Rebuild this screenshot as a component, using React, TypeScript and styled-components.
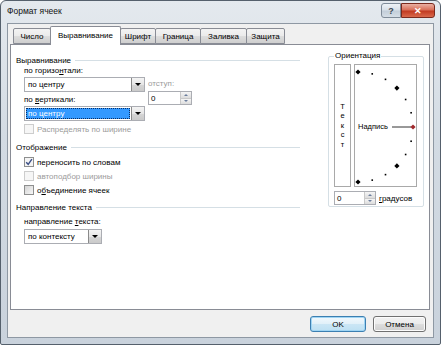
import React from 'react'
import styled, { createGlobalStyle, css } from 'styled-components'

const GlobalStyle = createGlobalStyle`
  html, body { margin: 0; padding: 0; background: #fff; }
  body { font-family: "Liberation Sans", Arial, sans-serif; font-size: 8px; color: #000; }
  * { box-sizing: border-box; }
`

const Window = styled.div`
  width: 441px;
  height: 345px;
  display: flex;
  flex-direction: column;
  border: 1px solid #55606c;
  border-radius: 6px 6px 2px 2px;
  background: linear-gradient(180deg, #e4e9ee 0%, #d3dbe3 40%, #c9d2dc 100%);
  padding: 0 6px 6px 6px;
`

const TitleBar = styled.div`
  height: 22px;
  display: flex;
  align-items: flex-start;
  justify-content: space-between;
`

const Title = styled.div`
  font-size: 8.5px;
  margin-top: 5px;
  margin-left: 0;
  color: #111;
`

const Caption = styled.div`
  display: flex;
  margin-top: 2px;
  margin-right: -1px;
`

const CapBtn = styled.div<{ $close?: boolean }>`
  height: 15px;
  width: ${({ $close }) => ($close ? '34px' : '20px')};
  display: flex;
  align-items: center;
  justify-content: center;
  border: 1px solid ${({ $close }) => ($close ? '#7a2a1e' : '#7f8b98')};
  border-radius: ${({ $close }) => ($close ? '0 3px 3px 0' : '3px 0 0 3px')};
  font-weight: bold;
  font-size: 9px;
  ${({ $close }) =>
    $close
      ? css`
          background: linear-gradient(180deg, #eab0a3 0%, #d9705a 45%, #c23b22 55%, #d9694c 100%);
          color: #fff;
        `
      : css`
          background: linear-gradient(180deg, #eef2f6 0%, #d8e0e8 45%, #c3ced9 55%, #d6dee6 100%);
          color: #3d4752;
        `}
`

const Client = styled.div`
  flex: 1;
  display: flex;
  flex-direction: column;
  background: #f0f0f0;
  border: 1px solid #8e98a3;
  padding: 2px 3px 0 2px;
`

const Tabs = styled.div`
  height: 18px;
  display: flex;
  align-items: flex-end;
  padding-left: 3px;
  position: relative;
  z-index: 1;
`

const Tab = styled.div<{ $w: number; $active?: boolean }>`
  width: ${({ $w }) => $w}px;
  height: ${({ $active }) => ($active ? 19 : 16)}px;
  margin-bottom: ${({ $active }) => ($active ? -1 : 0)}px;
  display: flex;
  align-items: center;
  justify-content: center;
  border: 1px solid #898c95;
  border-bottom: ${({ $active }) => ($active ? 'none' : '1px solid #898c95')};
  margin-right: -1px;
  border-radius: 2px 2px 0 0;
  padding-bottom: ${({ $active }) => ($active ? 2 : 0)}px;
  background: ${({ $active }) =>
    $active ? '#fff' : 'linear-gradient(180deg, #f3f3f3 0%, #ebebeb 50%, #dddddd 51%, #cfcfcf 100%)'};
  position: relative;
  z-index: ${({ $active }) => ($active ? 2 : 0)};
`

const Panel = styled.div`
  height: 266px;
  background: #fff;
  border: 1px solid #898c95;
  display: grid;
  grid-template-columns: 284px 96px;
  column-gap: 28px;
  padding: 9px 0 0 5px;
  align-items: start;
`

const LeftCol = styled.div`
  display: flex;
  flex-direction: column;
`

const GroupHead = styled.div<{ $mt?: number }>`
  display: flex;
  align-items: center;
  height: 12px;
  margin-top: ${({ $mt }) => $mt ?? 0}px;
  &::after {
    content: '';
    flex: 1;
    height: 1px;
    background: #d5dfe5;
    margin-left: 4px;
  }
`

const Label = styled.div<{ $disabled?: boolean; $mt?: number }>`
  height: 12px;
  line-height: 12px;
  margin-top: ${({ $mt }) => $mt ?? 0}px;
  color: ${({ $disabled }) => ($disabled ? '#9b9b9b' : '#000')};
  white-space: nowrap;
`

const Indented = styled.div<{ $mt?: number }>`
  padding-left: 8px;
  margin-top: ${({ $mt }) => $mt ?? 0}px;
  display: flex;
  flex-direction: column;
`

const AlignRow = styled.div`
  display: flex;
  gap: 3px;
  margin-top: -1px;
`

const Stack = styled.div`
  display: flex;
  flex-direction: column;
`

const IndentCol = styled.div`
  display: flex;
  flex-direction: column;
  padding-top: 13px;
`

const Combo = styled.div<{ $w: number; $mt?: number }>`
  width: ${({ $w }) => $w}px;
  height: 15px;
  margin-top: ${({ $mt }) => $mt ?? 0}px;
  display: flex;
  border: 1px solid #abadb3;
  background: #fff;
`

const ComboText = styled.div<{ $selected?: boolean }>`
  flex: 1;
  display: flex;
  align-items: center;
  padding-left: 2px;
  margin: 1px;
  ${({ $selected }) =>
    $selected &&
    css`
      background: #3399ff;
      color: #fff;
      outline: 1px dotted #0b2f63;
      outline-offset: -1px;
    `}
`

const DropBtn = styled.div`
  width: 13px;
  display: flex;
  align-items: center;
  justify-content: center;
  border-left: 1px solid #8a8a8a;
  background: linear-gradient(180deg, #f4f4f4 0%, #e6e6e6 50%, #d6d6d6 51%, #cacaca 100%);
  &::after {
    content: '';
    border-left: 3px solid transparent;
    border-right: 3px solid transparent;
    border-top: 3px solid #000;
  }
`

const Spin = styled.div<{ $w: number }>`
  width: ${({ $w }) => $w}px;
  height: 14px;
  display: flex;
  border: 1px solid #abadb3;
  background: #fff;
  margin-top: 1px;
`

const SpinText = styled.div`
  flex: 1;
  display: flex;
  align-items: center;
  padding-left: 2px;
`

const SpinBtns = styled.div`
  width: 11px;
  display: flex;
  flex-direction: column;
  border-left: 1px solid #c9c9c9;
`

const SpinArrow = styled.div<{ $up?: boolean }>`
  flex: 1;
  display: flex;
  align-items: center;
  justify-content: center;
  background: linear-gradient(180deg, #f5f5f5, #dcdcdc);
  border-bottom: ${({ $up }) => ($up ? '1px solid #c9c9c9' : 'none')};
  &::after {
    content: '';
    border-left: 2px solid transparent;
    border-right: 2px solid transparent;
    ${({ $up }) => ($up ? 'border-bottom: 2px solid #6a7d9c;' : 'border-top: 2px solid #6a7d9c;')}
  }
`

const CheckRow = styled.div<{ $h?: number; $mt?: number; $disabled?: boolean }>`
  height: ${({ $h }) => $h ?? 14}px;
  margin-top: ${({ $mt }) => $mt ?? 0}px;
  display: flex;
  align-items: center;
  gap: 3px;
  color: ${({ $disabled }) => ($disabled ? '#9b9b9b' : '#000')};
`

const Box = styled.div<{ $disabled?: boolean; $checked?: boolean }>`
  width: 10px;
  height: 10px;
  display: flex;
  align-items: center;
  justify-content: center;
  border: 1px solid ${({ $disabled }) => ($disabled ? '#cdcdcd' : '#8e8f8f')};
  background: ${({ $disabled, $checked }) =>
    $disabled ? '#f6f6f6' : $checked ? '#f4f4f4' : 'linear-gradient(135deg, #d4d4d4, #f7f7f7)'};
`

const Orientation = styled.div`
  margin-top: 2px;
  border: 1px solid #d5dfe5;
  border-radius: 2px;
  padding: 0 6px 1px 5px;
  display: flex;
  flex-direction: column;
`

const Legend = styled.div`
  align-self: flex-start;
  height: 12px;
  line-height: 12px;
  margin-top: -7px;
  padding: 0 1px;
  background: #fff;
`

const OrientRow = styled.div`
  display: flex;
  gap: 3px;
  margin-top: 2px;
`

const VertText = styled.div`
  width: 17px;
  height: 123px;
  border: 1px solid #a9a9a9;
  display: flex;
  flex-direction: column;
  align-items: center;
  justify-content: center;
  font-size: 7.5px;
  line-height: 9.5px;
`

const Dial = styled.div`
  width: 63px;
  height: 123px;
  border: 1px solid #a9a9a9;
  position: relative;
`

const DialCaption = styled.span`
  position: absolute;
  left: 3px;
  top: 56px;
  line-height: 12px;
  font-size: 7.5px;
`

const DegreeRow = styled.div`
  display: flex;
  align-items: center;
  gap: 3px;
  margin-top: 4px;
  margin-bottom: 0;
  & > div { margin-top: 0; }
`

const Footer = styled.div`
  display: flex;
  justify-content: flex-end;
  gap: 7px;
  padding: 6px 4px 0 0;
`

const Button = styled.div<{ $w: number; $default?: boolean }>`
  width: ${({ $w }) => $w}px;
  height: 16px;
  display: flex;
  align-items: center;
  justify-content: center;
  border: 1px solid ${({ $default }) => ($default ? '#3c7fb1' : '#707070')};
  border-radius: 3px;
  background: ${({ $default }) =>
    $default
      ? 'linear-gradient(180deg, #f2f9fd 0%, #e1f0f9 50%, #cbe6f5 51%, #bde0f3 100%)'
      : 'linear-gradient(180deg, #f2f2f2 0%, #ebebeb 50%, #dddddd 51%, #cfcfcf 100%)'};
  box-shadow: ${({ $default }) => ($default ? 'inset 0 0 0 1px #9fd5f4' : 'inset 0 0 0 1px #fcfcfc')};
`

const tabs = [
  { t: 'Число', w: 38 },
  { t: 'Выравнивание', w: 71, active: true },
  { t: 'Шрифт', w: 36 },
  { t: 'Граница', w: 46 },
  { t: 'Заливка', w: 47 },
  { t: 'Защита', w: 39 },
]

function CheckMark() {
  return (
    <svg width="8" height="8" viewBox="0 0 8 8">
      <path d="M1.2 4.2 L3.2 6.3 L6.9 1.2" fill="none" stroke="#3b4f86" strokeWidth="1.4" />
    </svg>
  )
}

function DialMarks() {
  const cx = 3
  const cy = 62
  const r = 55
  const marks = []
  for (let a = 90; a >= -90; a -= 15) {
    const rad = (a * Math.PI) / 180
    const x = cx + r * Math.cos(rad)
    const y = cy - r * Math.sin(rad)
    if (a % 45 === 0) {
      const s = 2.6
      marks.push(
        <polygon
          key={a}
          points={`${x},${y - s} ${x + s},${y} ${x},${y + s} ${x - s},${y}`}
          fill={a === 0 ? '#a0282b' : '#000'}
        />
      )
    } else {
      marks.push(<rect key={a} x={x - 0.8} y={y - 0.8} width={1.6} height={1.6} fill="#000" />)
    }
  }
  return (
    <svg width="61" height="121" style={{ position: 'absolute', left: 0, top: 0 }}>
      <line x1="37" y1={cy} x2="56" y2={cy} stroke="#333" strokeWidth="1" />
      {marks}
    </svg>
  )
}

export default function App() {
  return (
    <>
      <GlobalStyle />
      <Window>
        <TitleBar>
          <Title>Формат ячеек</Title>
          <Caption>
            <CapBtn>?</CapBtn>
            <CapBtn $close>✕</CapBtn>
          </Caption>
        </TitleBar>
        <Client>
          <Tabs>
            {tabs.map((t) => (
              <Tab key={t.t} $w={t.w} $active={t.active}>
                {t.t}
              </Tab>
            ))}
          </Tabs>
          <Panel>
            <LeftCol>
              <GroupHead>Выравнивание</GroupHead>
              <Indented>
                <AlignRow>
                  <Stack>
                    <Label>
                      по горизо<u>н</u>тали:
                    </Label>
                    <Combo $w={121}>
                      <ComboText>по центру</ComboText>
                      <DropBtn />
                    </Combo>
                    <Label $mt={2}>
                      по <u>в</u>ертикали:
                    </Label>
                    <Combo $w={121}>
                      <ComboText $selected>по центру</ComboText>
                      <DropBtn />
                    </Combo>
                  </Stack>
                  <IndentCol>
                    <Label $disabled>отступ:</Label>
                    <Spin $w={44}>
                      <SpinText>0</SpinText>
                      <SpinBtns>
                        <SpinArrow $up />
                        <SpinArrow />
                      </SpinBtns>
                    </Spin>
                  </IndentCol>
                </AlignRow>
                <CheckRow $h={12} $mt={2} $disabled>
                  <Box $disabled />
                  Распределять по ширине
                </CheckRow>
              </Indented>
              <GroupHead $mt={6}>Отображение</GroupHead>
              <Indented $mt={2}>
                <CheckRow>
                  <Box $checked>
                    <CheckMark />
                  </Box>
                  переносить по словам
                </CheckRow>
                <CheckRow $disabled>
                  <Box $disabled />
                  автоподбор ширины
                </CheckRow>
                <CheckRow>
                  <Box />
                  <span>
                    о<u>б</u>ъединение ячеек
                  </span>
                </CheckRow>
              </Indented>
              <GroupHead $mt={4}>Направление текста</GroupHead>
              <Indented $mt={3}>
                <Label>
                  направление <u>т</u>екста:
                </Label>
                <Combo $w={78} $mt={1}>
                  <ComboText>по контексту</ComboText>
                  <DropBtn />
                </Combo>
              </Indented>
            </LeftCol>
            <Orientation>
              <Legend>Ориентация</Legend>
              <OrientRow>
                <VertText>
                  <span>Т</span>
                  <span>е</span>
                  <span>к</span>
                  <span>с</span>
                  <span>т</span>
                </VertText>
                <Dial>
                  <DialMarks />
                  <DialCaption>Надпись</DialCaption>
                </Dial>
              </OrientRow>
              <DegreeRow>
                <Spin $w={42}>
                  <SpinText>0</SpinText>
                  <SpinBtns>
                    <SpinArrow $up />
                    <SpinArrow />
                  </SpinBtns>
                </Spin>
                <span>
                  <u>г</u>радусов
                </span>
              </DegreeRow>
            </Orientation>
          </Panel>
          <Footer>
            <Button $w={56} $default>
              OK
            </Button>
            <Button $w={53}>Отмена</Button>
          </Footer>
        </Client>
      </Window>
    </>
  )
}
